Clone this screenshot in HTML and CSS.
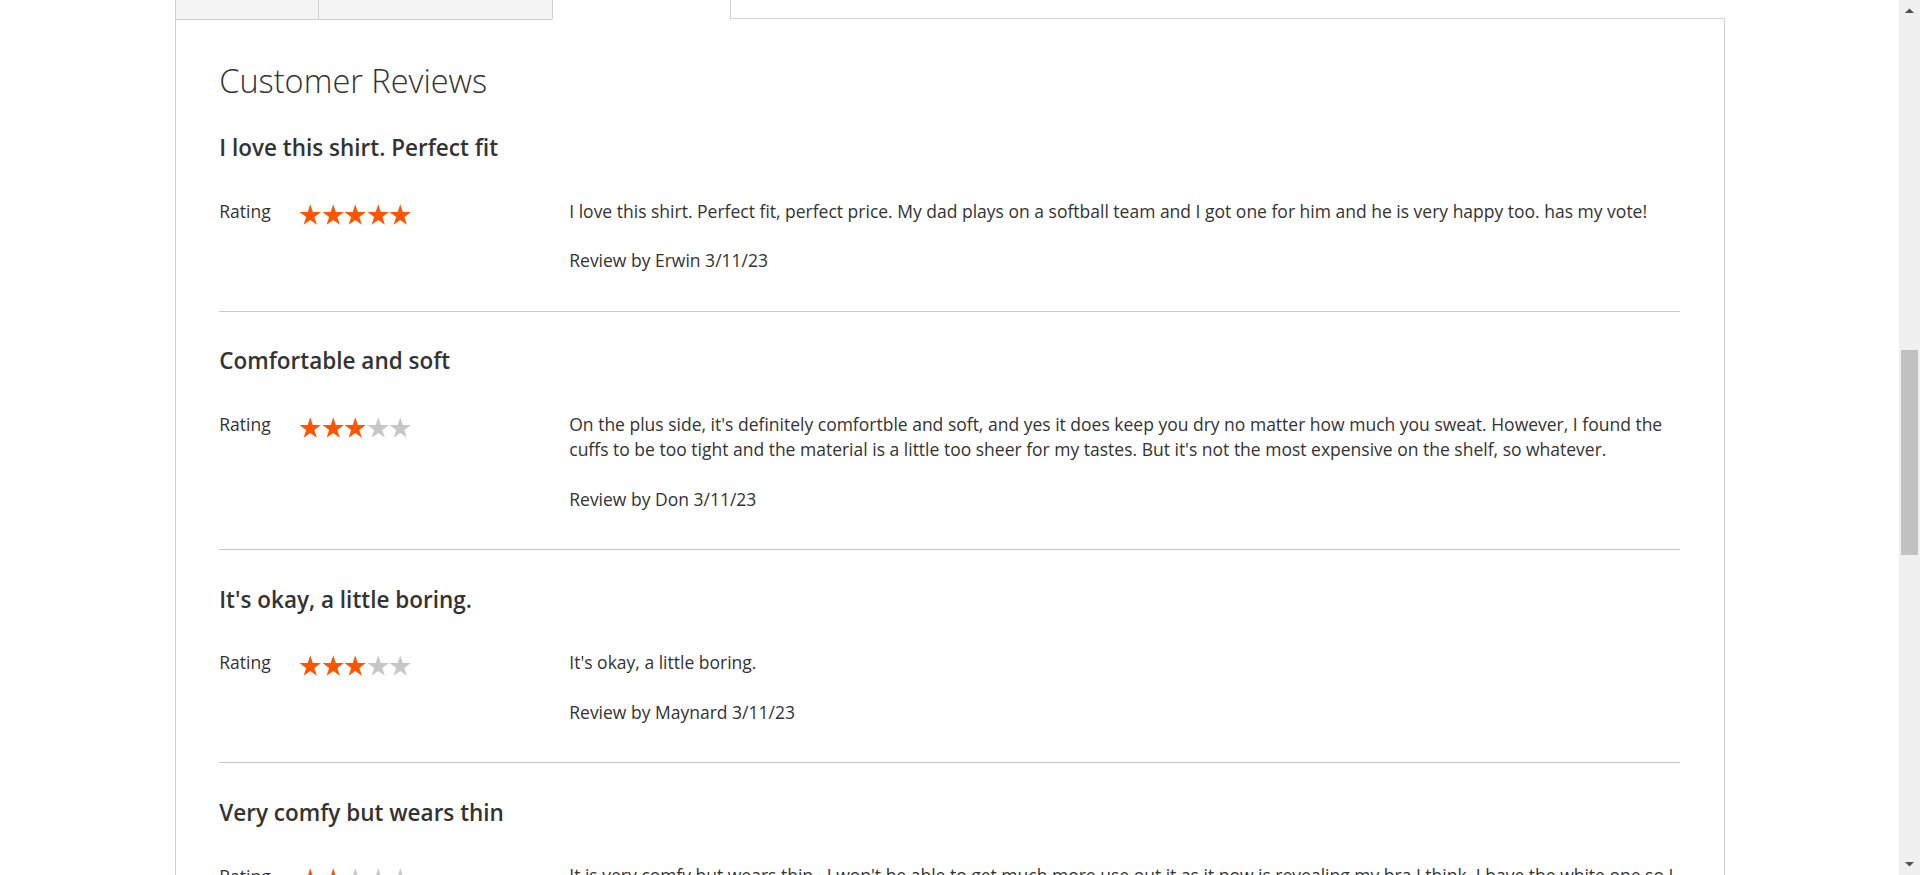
FILE: index.html
```html
<!DOCTYPE html>
<html lang="en">
<head>
<meta charset="utf-8">
<title>Customer Reviews</title>
<link rel="stylesheet" href="styles.css">
</head>
<body>
<div class="window">
  <main class="viewport">
    <div class="columns">
      <div class="tabs">
        <div class="tab tab-details">Details</div>
        <div class="tab tab-info">More Information</div>
        <div class="tab tab-reviews tab-active">Reviews (4)</div>
      </div>
      <section class="tab-content">
        <h2 class="block-title">Customer Reviews</h2>
        <ol class="review-items">
          <li class="review-item">
            <div class="review-title">I love this shirt. Perfect fit</div>
            <div class="review-body">
              <div class="review-ratings">
                <span class="rating-label">Rating</span>
                <span class="stars">
                  <svg class="star star-on" viewBox="0 0 21.5 20"><polygon points="10.75,0.25 13.17,7.7 21,7.7 14.67,12.3 17.09,19.75 10.75,15.15 4.41,19.75 6.83,12.3 0.5,7.7 8.33,7.7"/></svg>
                  <svg class="star star-on" viewBox="0 0 21.5 20"><polygon points="10.75,0.25 13.17,7.7 21,7.7 14.67,12.3 17.09,19.75 10.75,15.15 4.41,19.75 6.83,12.3 0.5,7.7 8.33,7.7"/></svg>
                  <svg class="star star-on" viewBox="0 0 21.5 20"><polygon points="10.75,0.25 13.17,7.7 21,7.7 14.67,12.3 17.09,19.75 10.75,15.15 4.41,19.75 6.83,12.3 0.5,7.7 8.33,7.7"/></svg>
                  <svg class="star star-on" viewBox="0 0 21.5 20"><polygon points="10.75,0.25 13.17,7.7 21,7.7 14.67,12.3 17.09,19.75 10.75,15.15 4.41,19.75 6.83,12.3 0.5,7.7 8.33,7.7"/></svg>
                  <svg class="star star-on" viewBox="0 0 21.5 20"><polygon points="10.75,0.25 13.17,7.7 21,7.7 14.67,12.3 17.09,19.75 10.75,15.15 4.41,19.75 6.83,12.3 0.5,7.7 8.33,7.7"/></svg>
                </span>
              </div>
              <div class="review-main">
                <p class="review-content">I love this shirt. Perfect fit, perfect price. My dad plays on a softball team and I got one for him and he is very happy too. has my vote!</p>
                <p class="review-details">Review by Erwin 3/11/23</p>
              </div>
            </div>
          </li>
          <li class="review-item">
            <div class="review-title">Comfortable and soft</div>
            <div class="review-body">
              <div class="review-ratings">
                <span class="rating-label">Rating</span>
                <span class="stars">
                  <svg class="star star-on" viewBox="0 0 21.5 20"><polygon points="10.75,0.25 13.17,7.7 21,7.7 14.67,12.3 17.09,19.75 10.75,15.15 4.41,19.75 6.83,12.3 0.5,7.7 8.33,7.7"/></svg>
                  <svg class="star star-on" viewBox="0 0 21.5 20"><polygon points="10.75,0.25 13.17,7.7 21,7.7 14.67,12.3 17.09,19.75 10.75,15.15 4.41,19.75 6.83,12.3 0.5,7.7 8.33,7.7"/></svg>
                  <svg class="star star-on" viewBox="0 0 21.5 20"><polygon points="10.75,0.25 13.17,7.7 21,7.7 14.67,12.3 17.09,19.75 10.75,15.15 4.41,19.75 6.83,12.3 0.5,7.7 8.33,7.7"/></svg>
                  <svg class="star star-off" viewBox="0 0 21.5 20"><polygon points="10.75,0.25 13.17,7.7 21,7.7 14.67,12.3 17.09,19.75 10.75,15.15 4.41,19.75 6.83,12.3 0.5,7.7 8.33,7.7"/></svg>
                  <svg class="star star-off" viewBox="0 0 21.5 20"><polygon points="10.75,0.25 13.17,7.7 21,7.7 14.67,12.3 17.09,19.75 10.75,15.15 4.41,19.75 6.83,12.3 0.5,7.7 8.33,7.7"/></svg>
                </span>
              </div>
              <div class="review-main">
                <p class="review-content">On the plus side, it's definitely comfortble and soft, and yes it does keep you dry no matter how much you sweat. However, I found the cuffs to be too tight and the material is a little too sheer for my tastes. But it's not the most expensive on the shelf, so whatever.</p>
                <p class="review-details">Review by Don 3/11/23</p>
              </div>
            </div>
          </li>
          <li class="review-item">
            <div class="review-title">It's okay, a little boring.</div>
            <div class="review-body">
              <div class="review-ratings">
                <span class="rating-label">Rating</span>
                <span class="stars">
                  <svg class="star star-on" viewBox="0 0 21.5 20"><polygon points="10.75,0.25 13.17,7.7 21,7.7 14.67,12.3 17.09,19.75 10.75,15.15 4.41,19.75 6.83,12.3 0.5,7.7 8.33,7.7"/></svg>
                  <svg class="star star-on" viewBox="0 0 21.5 20"><polygon points="10.75,0.25 13.17,7.7 21,7.7 14.67,12.3 17.09,19.75 10.75,15.15 4.41,19.75 6.83,12.3 0.5,7.7 8.33,7.7"/></svg>
                  <svg class="star star-on" viewBox="0 0 21.5 20"><polygon points="10.75,0.25 13.17,7.7 21,7.7 14.67,12.3 17.09,19.75 10.75,15.15 4.41,19.75 6.83,12.3 0.5,7.7 8.33,7.7"/></svg>
                  <svg class="star star-off" viewBox="0 0 21.5 20"><polygon points="10.75,0.25 13.17,7.7 21,7.7 14.67,12.3 17.09,19.75 10.75,15.15 4.41,19.75 6.83,12.3 0.5,7.7 8.33,7.7"/></svg>
                  <svg class="star star-off" viewBox="0 0 21.5 20"><polygon points="10.75,0.25 13.17,7.7 21,7.7 14.67,12.3 17.09,19.75 10.75,15.15 4.41,19.75 6.83,12.3 0.5,7.7 8.33,7.7"/></svg>
                </span>
              </div>
              <div class="review-main">
                <p class="review-content">It's okay, a little boring.</p>
                <p class="review-details">Review by Maynard 3/11/23</p>
              </div>
            </div>
          </li>
          <li class="review-item">
            <div class="review-title">Very comfy but wears thin</div>
            <div class="review-body">
              <div class="review-ratings">
                <span class="rating-label">Rating</span>
                <span class="stars">
                  <svg class="star star-on" viewBox="0 0 21.5 20"><polygon points="10.75,0.25 13.17,7.7 21,7.7 14.67,12.3 17.09,19.75 10.75,15.15 4.41,19.75 6.83,12.3 0.5,7.7 8.33,7.7"/></svg>
                  <svg class="star star-on" viewBox="0 0 21.5 20"><polygon points="10.75,0.25 13.17,7.7 21,7.7 14.67,12.3 17.09,19.75 10.75,15.15 4.41,19.75 6.83,12.3 0.5,7.7 8.33,7.7"/></svg>
                  <svg class="star star-off" viewBox="0 0 21.5 20"><polygon points="10.75,0.25 13.17,7.7 21,7.7 14.67,12.3 17.09,19.75 10.75,15.15 4.41,19.75 6.83,12.3 0.5,7.7 8.33,7.7"/></svg>
                  <svg class="star star-off" viewBox="0 0 21.5 20"><polygon points="10.75,0.25 13.17,7.7 21,7.7 14.67,12.3 17.09,19.75 10.75,15.15 4.41,19.75 6.83,12.3 0.5,7.7 8.33,7.7"/></svg>
                  <svg class="star star-off" viewBox="0 0 21.5 20"><polygon points="10.75,0.25 13.17,7.7 21,7.7 14.67,12.3 17.09,19.75 10.75,15.15 4.41,19.75 6.83,12.3 0.5,7.7 8.33,7.7"/></svg>
                </span>
              </div>
              <div class="review-main">
                <p class="review-content">It is very comfy but wears thin.&nbsp; I won't be able to get much more use out it as it now is revealing my bra I think. I have the white one so I will probably have to get a new one soon.</p>
                <p class="review-details">Review by Bernita 3/11/23</p>
              </div>
            </div>
          </li>
        </ol>
      </section>
    </div>
  </main>
  <aside class="scrollbar">
    <div class="sb-btn">
      <svg class="sb-arrow" viewBox="0 0 9 5"><polygon points="0,5 4.5,0.5 9,5"/></svg>
    </div>
    <div class="sb-track">
      <div class="sb-thumb"></div>
    </div>
    <div class="sb-btn">
      <svg class="sb-arrow" viewBox="0 0 9 5"><polygon points="0,0 9,0 4.5,4.5"/></svg>
    </div>
  </aside>
</div>
</body>
</html>
```
FILE: styles.css
```css
* {
  box-sizing: border-box;
}

html,
body {
  margin: 0;
  padding: 0;
  height: 100%;
  overflow: hidden;
  background: #fff;
}

body {
  font-family: "Open Sans", "Helvetica Neue", Helvetica, Arial, sans-serif;
  color: #333;
}

.window {
  display: flex;
  height: 100vh;
}

.viewport {
  flex: 1;
  min-width: 0;
  overflow: hidden;
}

.columns {
  zoom: 1.25;
  max-width: 1280px;
  margin: 0 auto;
  padding: 0 20px;
  font-size: 14px;
  line-height: 1.42857;
}

/* Tabs */
.tabs {
  display: flex;
  margin-top: -31.4px;
  margin-bottom: -1px;
  position: relative;
  z-index: 1;
}

.tab {
  height: 47px;
  padding: 0 25px 5px;
  margin-right: -1px;
  border: 1px solid #d1d1d1;
  background: #f4f4f4;
  font-size: 18px;
  font-weight: 600;
  line-height: 40px;
  color: #7d7d7d;
  white-space: nowrap;
  overflow: hidden;
}

.tab-details {
  width: 116px;
}

.tab-info {
  width: 188px;
}

.tab-reviews {
  width: 143px;
  padding-left: 17px;
  padding-right: 0;
}

.tab-active {
  background: #fff;
  border-bottom-color: #fff;
  color: #333;
}

/* Content */
.tab-content {
  border: 1px solid #d1d1d1;
  padding: 35px;
}

.block-title {
  margin: 0;
  font-size: 26px;
  font-weight: 300;
  line-height: 1.1;
}

.review-items {
  list-style: none;
  margin: 0;
  padding: 0;
}

.review-item {
  padding: 30px 0;
  border-bottom: 1px solid #c9c9c9;
}

.review-title {
  margin: 0 0 30px;
  font-size: 18px;
  font-weight: 600;
  line-height: 1.1;
}

.review-body {
  display: grid;
  grid-template-columns: 280px 1fr;
}

.review-ratings {
  display: flex;
  align-items: flex-start;
  padding-top: 0.4px;
}

.rating-label {
  padding-right: 23px;
}

.stars {
  display: flex;
  margin-top: 3.8px;
}

.star {
  display: block;
  width: 18px;
  height: 16.8px;
}

.star-on {
  fill: #ff5501;
}

.star-off {
  fill: #c7c7c7;
}

.review-content {
  margin: 0 0 20px;
}

.review-details {
  margin: 0;
}

/* Scrollbar */
.scrollbar {
  flex: none;
  width: 21px;
  background: #f0f0f0;
  display: flex;
  flex-direction: column;
}

.sb-btn {
  flex: none;
  height: 21px;
  display: flex;
  align-items: center;
  justify-content: center;
}

.sb-arrow {
  display: block;
  width: 9px;
  height: 5px;
  fill: #505050;
}

.sb-track {
  flex: 1;
  padding: 0 2px;
}

.sb-thumb {
  margin-top: 329px;
  height: 205px;
  background: #c1c1c1;
}
```
